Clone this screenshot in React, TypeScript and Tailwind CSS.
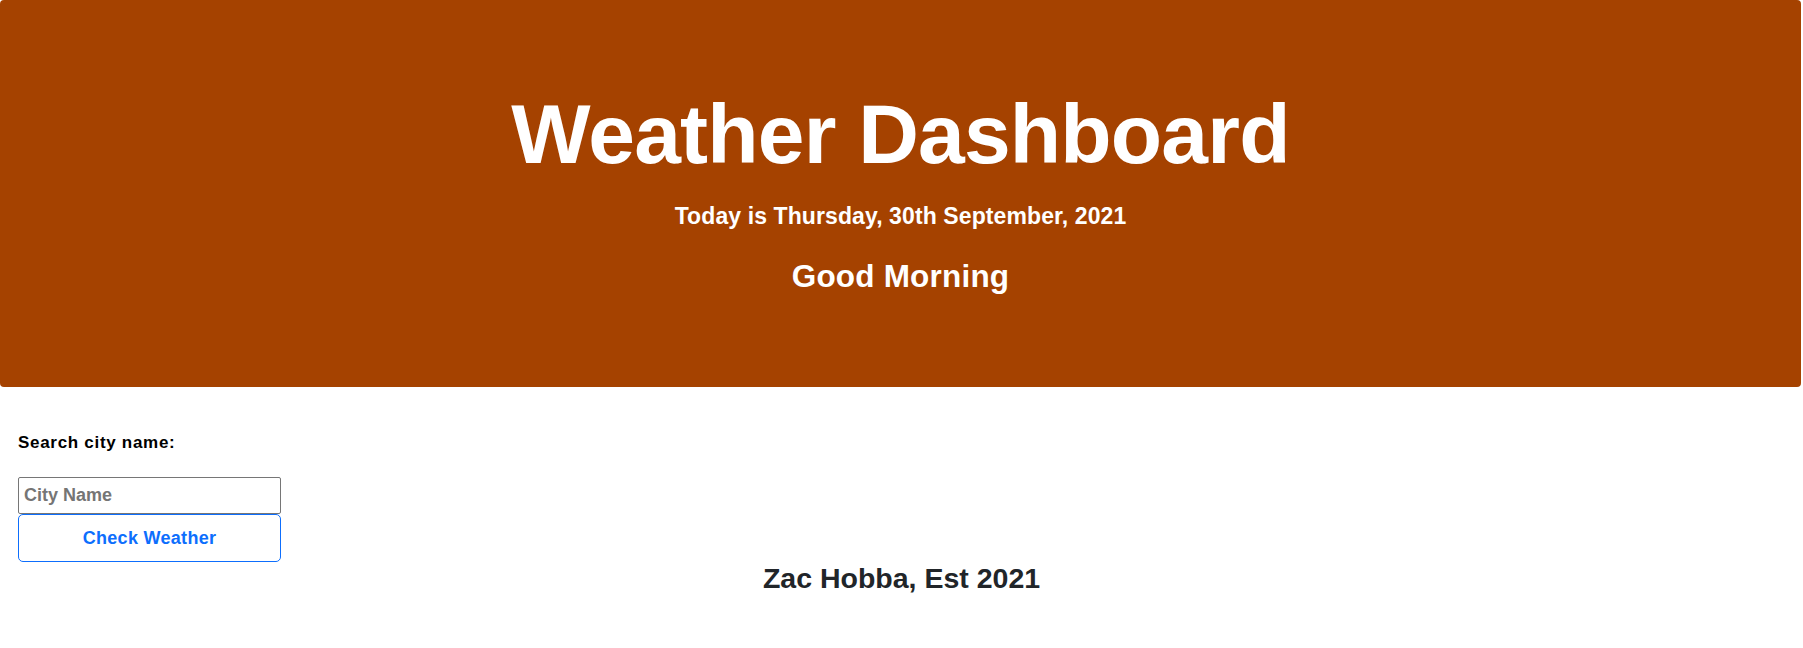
import React from "react";

export default function App() {
  return (
    <div className="min-h-screen bg-white" style={{ fontFamily: '"Liberation Sans", Arial, sans-serif' }}>
      <header className="mr-[2px] rounded-[4px] bg-[#a54200] pt-[84px] pb-[92px] text-center text-white">
        <h1 className="text-[84px] leading-[101px] font-bold tracking-[-0.8px]">Weather Dashboard</h1>
        <p className="mt-[18px] text-[23px] leading-[27px] font-bold tracking-[0.1px]">Today is Thursday, 30th September, 2021</p>
        <h2 className="mt-[28px] text-[31.5px] leading-[37px] font-bold tracking-[0.2px]">Good Morning</h2>
      </header>
      <main className="px-[18px]">
        <label className="mt-[46px] block text-[17px] leading-[20px] font-bold tracking-[0.7px] text-black">
          Search city name:
        </label>
        <div className="mt-[24px] flex w-[263px] flex-col">
          <input
            type="text"
            placeholder="City Name"
            className="h-[37px] w-full rounded-[2px] border border-[#767676] px-[5px] text-[18px] font-bold text-black outline-none placeholder:text-[#757575]"
          />
          <button className="h-[48px] w-full rounded-[5px] border border-[#0d6efd] text-[18px] font-bold tracking-[0.3px] text-[#0d6efd]">
            Check Weather
          </button>
        </div>
      </main>
      <footer className="-mt-[1px] text-center text-[28.5px] leading-[34px] font-bold text-[#212529]">
        Zac Hobba, Est 2021
      </footer>
    </div>
  );
}
